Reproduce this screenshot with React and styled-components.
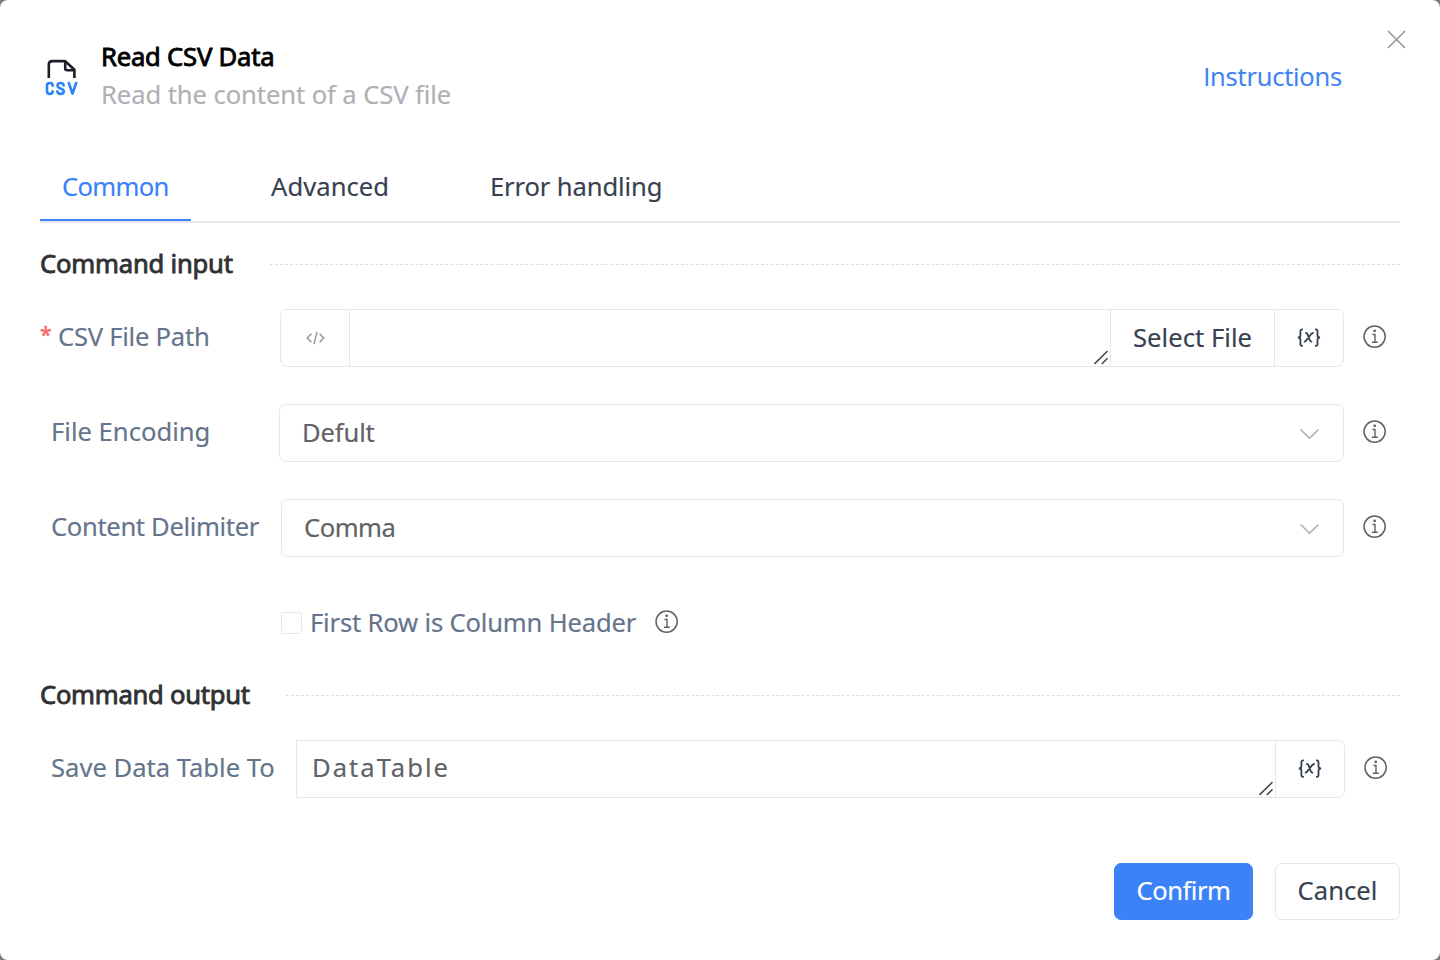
import React from "react";
import styled, { createGlobalStyle } from "styled-components";

const GlobalStyle = createGlobalStyle`
  *, *::before, *::after { box-sizing: border-box; }
  html, body, #root { margin: 0; width: 1440px; height: 960px; overflow: hidden; }
  body { background: #7f7f7f; font-family: "Noto Sans", "Open Sans", sans-serif; font-size: 25.6px; }
`;

const Dialog = styled.main`
  display: flex;
  flex-direction: column;
  width: 1440px;
  height: 960px;
  padding: 0 40px 40px;
  background: #fff;
  border-radius: 8px;
`;

const Text = styled.span`
  display: block;
  white-space: nowrap;
  line-height: 38px;
  letter-spacing: ${(p) => p.$ls || 0}px;
  -webkit-text-stroke: 0.15px currentColor;
`;

const Header = styled.header`
  display: flex;
  height: 152px;
  padding-top: 38px;
`;
const LogoSlot = styled.div`
  width: 61px;
  padding: 21px 0 0 5px;
  svg { display: block; }
`;
const Heading = styled.div`flex: 1;`;
const Title = styled(Text).attrs({ as: "h1" })`
  margin: 0;
  font-size: inherit;
  font-weight: 400;
  color: #000;
  -webkit-text-stroke: 0.85px #000;
`;
const Subtitle = styled(Text)`color: #b0afb5;`;
const Instructions = styled(Text).attrs({ as: "a" })`
  margin: 20px 45px 0 0;
  font-family: "Open Sans", sans-serif;
  color: #3b82f6;
`;
const CloseButton = styled.button`
  width: 19px;
  height: 19px;
  margin: -8px -6px 0 0;
  padding: 0;
  border: 0;
  background: none;
  svg { display: block; }
`;

const Tabs = styled.nav`
  display: flex;
  height: 71px;
  border-bottom: 2px solid #e4e7ed;
`;
const Tab = styled.div`
  width: ${(p) => p.$w}px;
  margin-right: ${(p) => p.$gap}px;
  padding: 16px 0 0 ${(p) => p.$pad}px;
  color: ${(p) => (p.$active ? "#3b82f6" : "#374151")};
  border-bottom: 2px solid ${(p) => (p.$active ? "#3b82f6" : "transparent")};
`;

const Section = styled.div`
  display: flex;
  align-items: center;
  height: 38px;
  margin-top: ${(p) => p.$top}px;
`;
const SectionTitle = styled(Text).attrs({ as: "h2" })`
  width: ${(p) => p.$w}px;
  margin: 0;
  font-size: inherit;
  font-weight: 400;
  color: #303133;
  -webkit-text-stroke: 0.85px #303133;
`;
const DashedLine = styled.div`
  flex: 1;
  height: 1px;
  border-top: 1px dashed #dcdfe6;
`;

const Row = styled.div`
  display: flex;
  align-items: center;
  height: 58px;
  margin-top: ${(p) => p.$top}px;
`;
const Label = styled.label`
  display: flex;
  width: ${(p) => p.$w}px;
  padding: 0 0 2px ${(p) => (p.$required ? 0 : 11)}px;
  color: #64748b;
`;
const Star = styled(Text)`
  width: 18px;
  color: #f56c6c;
  font-size: 21px;
  line-height: 32px;
  -webkit-text-stroke: 0.6px #f56c6c;
`;
const Control = styled.div`
  display: flex;
  width: ${(p) => p.$w}px;
  height: 58px;
  border: 1px solid #e4e7ed;
  border-radius: ${(p) => (p.$squareLeft ? "0 7px 7px 0" : "7px")};
  color: #606266;
`;
const Cell = styled.div`
  display: flex;
  align-items: center;
  justify-content: center;
  width: ${(p) => p.$w}px;
  color: #374151;
  border-left: ${(p) => (p.$first ? 0 : 1)}px solid #e4e7ed;
`;
const Input = styled.div`
  display: flex;
  flex: 1;
  align-items: center;
  justify-content: space-between;
  padding-left: ${(p) => p.$pad}px;
  border-left: ${(p) => (p.$divided ? 1 : 0)}px solid #e4e7ed;
`;
const Value = styled(Text)`padding-bottom: ${(p) => p.$lift || 0}px;`;
const ResizeGrip = styled.svg`
  align-self: flex-end;
  margin: 0 1px 1px 0;
`;
const SelectArrow = styled.svg`margin: 1px 23px 0 0;`;
const InfoSvg = styled.svg`
  display: block;
  margin: 0 0 2px 19px;
`;
const Checkbox = styled.span`
  width: 21px;
  height: 22px;
  margin-right: 8px;
  border: 1px solid #e4e7ed;
  border-radius: 3px;
`;
const CheckRow = styled.div`
  display: flex;
  align-items: center;
  height: 38px;
  margin-top: 47px;
  padding-left: 241px;
  color: #64748b;
`;

const Footer = styled.footer`
  display: flex;
  justify-content: flex-end;
  gap: 22px;
  margin-top: 65px;
`;
const Button = styled.button`
  width: ${(p) => p.$w}px;
  height: 57px;
  padding: 0 0 1px;
  display: flex;
  align-items: center;
  justify-content: center;
  font: inherit;
  border-radius: 7px;
  border: 1px solid ${(p) => (p.$primary ? "#3b82f6" : "#e4e7ed")};
  background: ${(p) => (p.$primary ? "#3b82f6" : "#fff")};
  color: ${(p) => (p.$primary ? "#fff" : "#374151")};
`;

const CsvLogo = () => (
  <svg width="33" height="38" viewBox="0 0 33 38" fill="none">
    <path d="M3.8 19V5.5Q3.8 2.1 7.2 2.1H20.2L29.4 10.8V19M20.2 2.1V9.2Q20.2 11.2 22.2 11.2H29.4" stroke="#201c2b" strokeWidth="2.6" strokeLinejoin="round" />
    <g stroke="#2a83fb" strokeWidth="2.6" strokeLinecap="round" strokeLinejoin="round">
      <path d="M7.6 26.8V26Q7.6 24 4.8 24T2 26.5V32.5Q2 34.9 4.8 34.9T7.6 32.9V32.2" />
      <path d="M18.7 26.5Q18.3 24 15.5 24Q12.5 24 12.5 26.5Q12.5 28.4 15.5 29.4Q18.8 30.4 18.8 32.5Q18.8 34.9 15.6 34.9Q12.6 34.9 12.3 32.4" />
      <path d="M23.8 24L27.5 34.7L31.2 24" />
    </g>
  </svg>
);

const Info = () => (
  <InfoSvg width="24" height="24" viewBox="0 0 24 24" fill="none" stroke="#606266">
    <circle cx="11.6" cy="11.6" r="10.6" strokeWidth="1.5" />
    <path d="M9.4 9.5H12V17M8.9 17.2H14.8" strokeWidth="1.4" />
    <circle cx="11.7" cy="5.8" r="1.4" fill="#606266" stroke="none" />
  </InfoSvg>
);

const Variable = () => (
  <svg width="24" height="20" viewBox="0 0 24 20" fill="none" stroke="#374151" strokeWidth="1.8">
    <path d="M5.9 1.4H5.2Q3.4 1.4 3.4 3.2V7.2Q3.4 9.5 .8 9.5Q3.4 9.5 3.4 11.8V16Q3.4 17.8 5.2 17.8H5.9" />
    <path d="M18 1.4H18.7Q20.5 1.4 20.5 3.2V7.2Q20.5 9.5 23.1 9.5Q20.5 9.5 20.5 11.8V16Q20.5 17.8 18.7 17.8H18" />
    <path d="M8.2 5H8.8Q10 5 10.6 6.4L12.8 12.2Q13.3 13.7 14.5 13.7H15.2M16.6 5H16.2Q15.1 5 14.1 6.2L9.3 12.4Q8.3 13.7 7.3 13.7H6.9" />
  </svg>
);

const Grip = () => (
  <ResizeGrip width="15" height="15" viewBox="0 0 15 15" stroke="#4a4a4a" strokeWidth="1.6" fill="none">
    <path d="M0.5 14L13.5 1M7.8 14L13.5 8.3" />
  </ResizeGrip>
);

const Arrow = () => (
  <SelectArrow width="21" height="12" viewBox="0 0 21 12" fill="none" stroke="#a8abb2" strokeWidth="1.5">
    <path d="M1.5 1.5L10.5 10.2L19.5 1.5" />
  </SelectArrow>
);

export default function App() {
  return (
    <>
      <GlobalStyle />
      <Dialog>
        <Header>
          <LogoSlot><CsvLogo /></LogoSlot>
          <Heading>
            <Title $ls={-0.2}>Read CSV Data</Title>
            <Subtitle $ls={-0.09}>Read the content of a CSV file</Subtitle>
          </Heading>
          <Instructions $ls={-0.22}>Instructions</Instructions>
          <CloseButton aria-label="Close">
            <svg width="19" height="19" viewBox="0 0 19 19" stroke="#909399" strokeWidth="1.5">
              <path d="M1 1L18 18M18 1L1 18" />
            </svg>
          </CloseButton>
        </Header>

        <Tabs>
          <Tab $w={151} $gap={57} $pad={22} $active><Text $ls={-0.7}>Common</Text></Tab>
          <Tab $w={163} $gap={57} $pad={23}><Text $ls={0.05}>Advanced</Text></Tab>
          <Tab $w={216} $gap={0} $pad={22}><Text $ls={-0.13}>Error handling</Text></Tab>
        </Tabs>

        <Section $top={22}>
          <SectionTitle $w={230} $ls={-0.2}>Command input</SectionTitle>
          <DashedLine />
        </Section>

        <Row $top={26}>
          <Label $w={240} $required><Star>*</Star><Text $ls={-0.25}>CSV File Path</Text></Label>
          <Control $w={1064}>
            <Cell $w={68} $first>
              <svg width="19" height="14" viewBox="0 0 19 14" fill="none" stroke="#909399" strokeWidth="1.4">
                <path d="M5.4 2.7L1.2 7L5.4 11.3M13.6 2.7L17.8 7L13.6 11.3M11 .8L8 13.2" />
              </svg>
            </Cell>
            <Input $divided><span /><Grip /></Input>
            <Cell $w={164}><Text $ls={0.05}>Select File</Text></Cell>
            <Cell $w={69}><Variable /></Cell>
          </Control>
          <Info />
        </Row>

        <Row $top={37}>
          <Label $w={239}><Text>File Encoding</Text></Label>
          <Control $w={1065}><Input $pad={22}><Value $ls={-0.15}>Defult</Value><Arrow /></Input></Control>
          <Info />
        </Row>

        <Row $top={37}>
          <Label $w={241}><Text $ls={-0.35}>Content Delimiter</Text></Label>
          <Control $w={1063}><Input $pad={22}><Value $ls={-0.5}>Comma</Value><Arrow /></Input></Control>
          <Info />
        </Row>

        <CheckRow>
          <Checkbox />
          <Text $ls={-0.18}>First Row is Column Header</Text>
          <Info />
        </CheckRow>

        <Section $top={34}>
          <SectionTitle $w={246} $ls={-0.27}>Command output</SectionTitle>
          <DashedLine />
        </Section>

        <Row $top={26}>
          <Label $w={256}><Text>Save Data Table To</Text></Label>
          <Control $w={1049} $squareLeft>
            <Input $pad={15}><Value $lift={2} $ls={2}>DataTable</Value><Grip /></Input>
            <Cell $w={69}><Variable /></Cell>
          </Control>
          <Info />
        </Row>

        <Footer>
          <Button $w={139} $primary><Text $ls={-0.5}>Confirm</Text></Button>
          <Button $w={125}><Text $ls={0.05}>Cancel</Text></Button>
        </Footer>
      </Dialog>
    </>
  );
}
